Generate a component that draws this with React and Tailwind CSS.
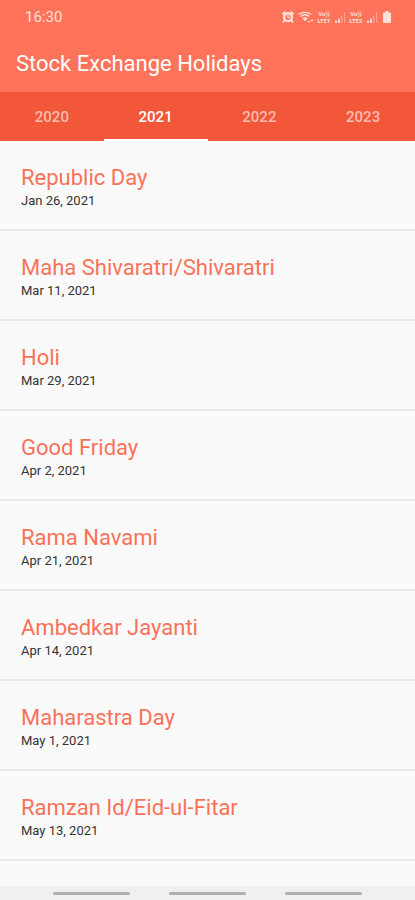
import React, { useState } from 'react';
import clsx from 'clsx';

const years = ['2020', '2021', '2022', '2023'];

const holidays = [
  { name: 'Republic Day', date: 'Jan 26, 2021' },
  { name: 'Maha Shivaratri/Shivaratri', date: 'Mar 11, 2021' },
  { name: 'Holi', date: 'Mar 29, 2021' },
  { name: 'Good Friday', date: 'Apr 2, 2021' },
  { name: 'Rama Navami', date: 'Apr 21, 2021' },
  { name: 'Ambedkar Jayanti', date: 'Apr 14, 2021' },
  { name: 'Maharastra Day', date: 'May 1, 2021' },
  { name: 'Ramzan Id/Eid-ul-Fitar', date: 'May 13, 2021' },
];

const AlarmIcon = () => (
  <svg className="h-3 w-3" viewBox="0 0 12 12" fill="none" stroke="currentColor">
    <circle cx="6" cy="6.2" r="3.9" strokeWidth="2.4" />
    <path d="M6 3.5v3h2" strokeWidth="1.1" />
    <path d="M.4 3.4 3.2.6M11.6 3.4 8.8.6M2.8 9.4.9 11.4M9.2 9.4l1.9 2" strokeWidth="1.8" />
  </svg>
);

const WifiIcon = () => (
  <svg className="ml-[2px] h-3 w-4" viewBox="0 0 16 12" fill="none" stroke="currentColor">
    <path d="M.8 3.6C4.4.6 9.6.6 13.2 3.6" strokeWidth="1.3" />
    <path d="M2.7 5.5c2.5-2 6.1-2 8.6 0" strokeWidth="1.3" />
    <path d="M4.3 7.2c1.6-1.2 3.8-1.2 5.4 0L7 10.3z" fill="currentColor" stroke="none" />
    <path d="m9.5 10 1.5 2 1.5-2zM12.5 10 14 8l1.5 2z" fill="currentColor" stroke="none" />
  </svg>
);

const SignalIcon = () => (
  <svg className="h-3 w-3" viewBox="0 0 12 12" fill="currentColor">
    <path d="M1 9.5h2V12H1zM4 7.5h2V12H4z" opacity=".9" />
    <path d="M7 4.5h1.5V12H7zM10 1h1.2v11H10z" opacity=".4" />
  </svg>
);

const BatteryIcon = () => (
  <svg className="ml-[3px] h-3 w-2" viewBox="0 0 8 12" fill="currentColor">
    <path d="M2.5 0h3v1.5H7a1 1 0 0 1 1 1V11a1 1 0 0 1-1 1H1a1 1 0 0 1-1-1V2.5a1 1 0 0 1 1-1h1.5z" />
  </svg>
);

const Volte = ({ sim }) => (
  <span className="flex w-4 flex-col items-center text-[6px] leading-[7px] font-bold">
    <span>Vo))</span>
    <span>{`LTE${sim}`}</span>
  </span>
);

const StatusBar = () => (
  <div className="flex h-[34px] items-center justify-between pr-6 pl-[25px] text-[#ffe0d8]">
    <span className="text-[15px]">16:30</span>
    <div className="flex items-center gap-[2px]">
      <AlarmIcon />
      <WifiIcon />
      <Volte sim={1} />
      <SignalIcon />
      <Volte sim={2} />
      <SignalIcon />
      <BatteryIcon />
    </div>
  </div>
);

const YearTabs = ({ active, onChange }) => (
  <div role="tablist" className="flex h-[49px] bg-[#f2573a]">
    {years.map((year) => (
      <button
        key={year}
        type="button"
        role="tab"
        aria-selected={year === active}
        onClick={() => onChange(year)}
        className={clsx(
          'flex-1 border-b-2 pt-1 text-[15px] font-medium',
          year === active ? 'border-white text-white' : 'border-transparent text-[#fbbdae]'
        )}
      >
        {year}
      </button>
    ))}
  </div>
);

const HolidayRow = ({ holiday }) => (
  <li className="border-b-2 border-[#eaeaea] px-[21px] pt-6 pb-[18px]">
    <h2 className="text-[22px] leading-[26px] text-[#fb7159]">{holiday.name}</h2>
    <p className="text-[13px] leading-5 text-[#333333]">{holiday.date}</p>
  </li>
);

const NavigationBar = () => (
  <div className="flex h-[14px] items-center justify-center gap-[39px] bg-[#f0f0f0]">
    {['Recents', 'Home', 'Back'].map((label) => (
      <button key={label} type="button" aria-label={label} className="h-[3px] w-[77px] rounded-full bg-[#b0b0b0]" />
    ))}
  </div>
);

const App = () => {
  const [year, setYear] = useState('2021');

  return (
    <div className="flex min-h-screen flex-col bg-[#fafafa] font-['Roboto',sans-serif]">
      <header className="bg-[#ff735a]">
        <StatusBar />
        <h1 className="flex h-[58px] items-center px-4 text-[22px] text-white">Stock Exchange Holidays</h1>
        <YearTabs active={year} onChange={setYear} />
      </header>
      <ul className="flex-1">
        {holidays.map((holiday) => (
          <HolidayRow key={holiday.name} holiday={holiday} />
        ))}
      </ul>
      <NavigationBar />
    </div>
  );
};

export default App;
